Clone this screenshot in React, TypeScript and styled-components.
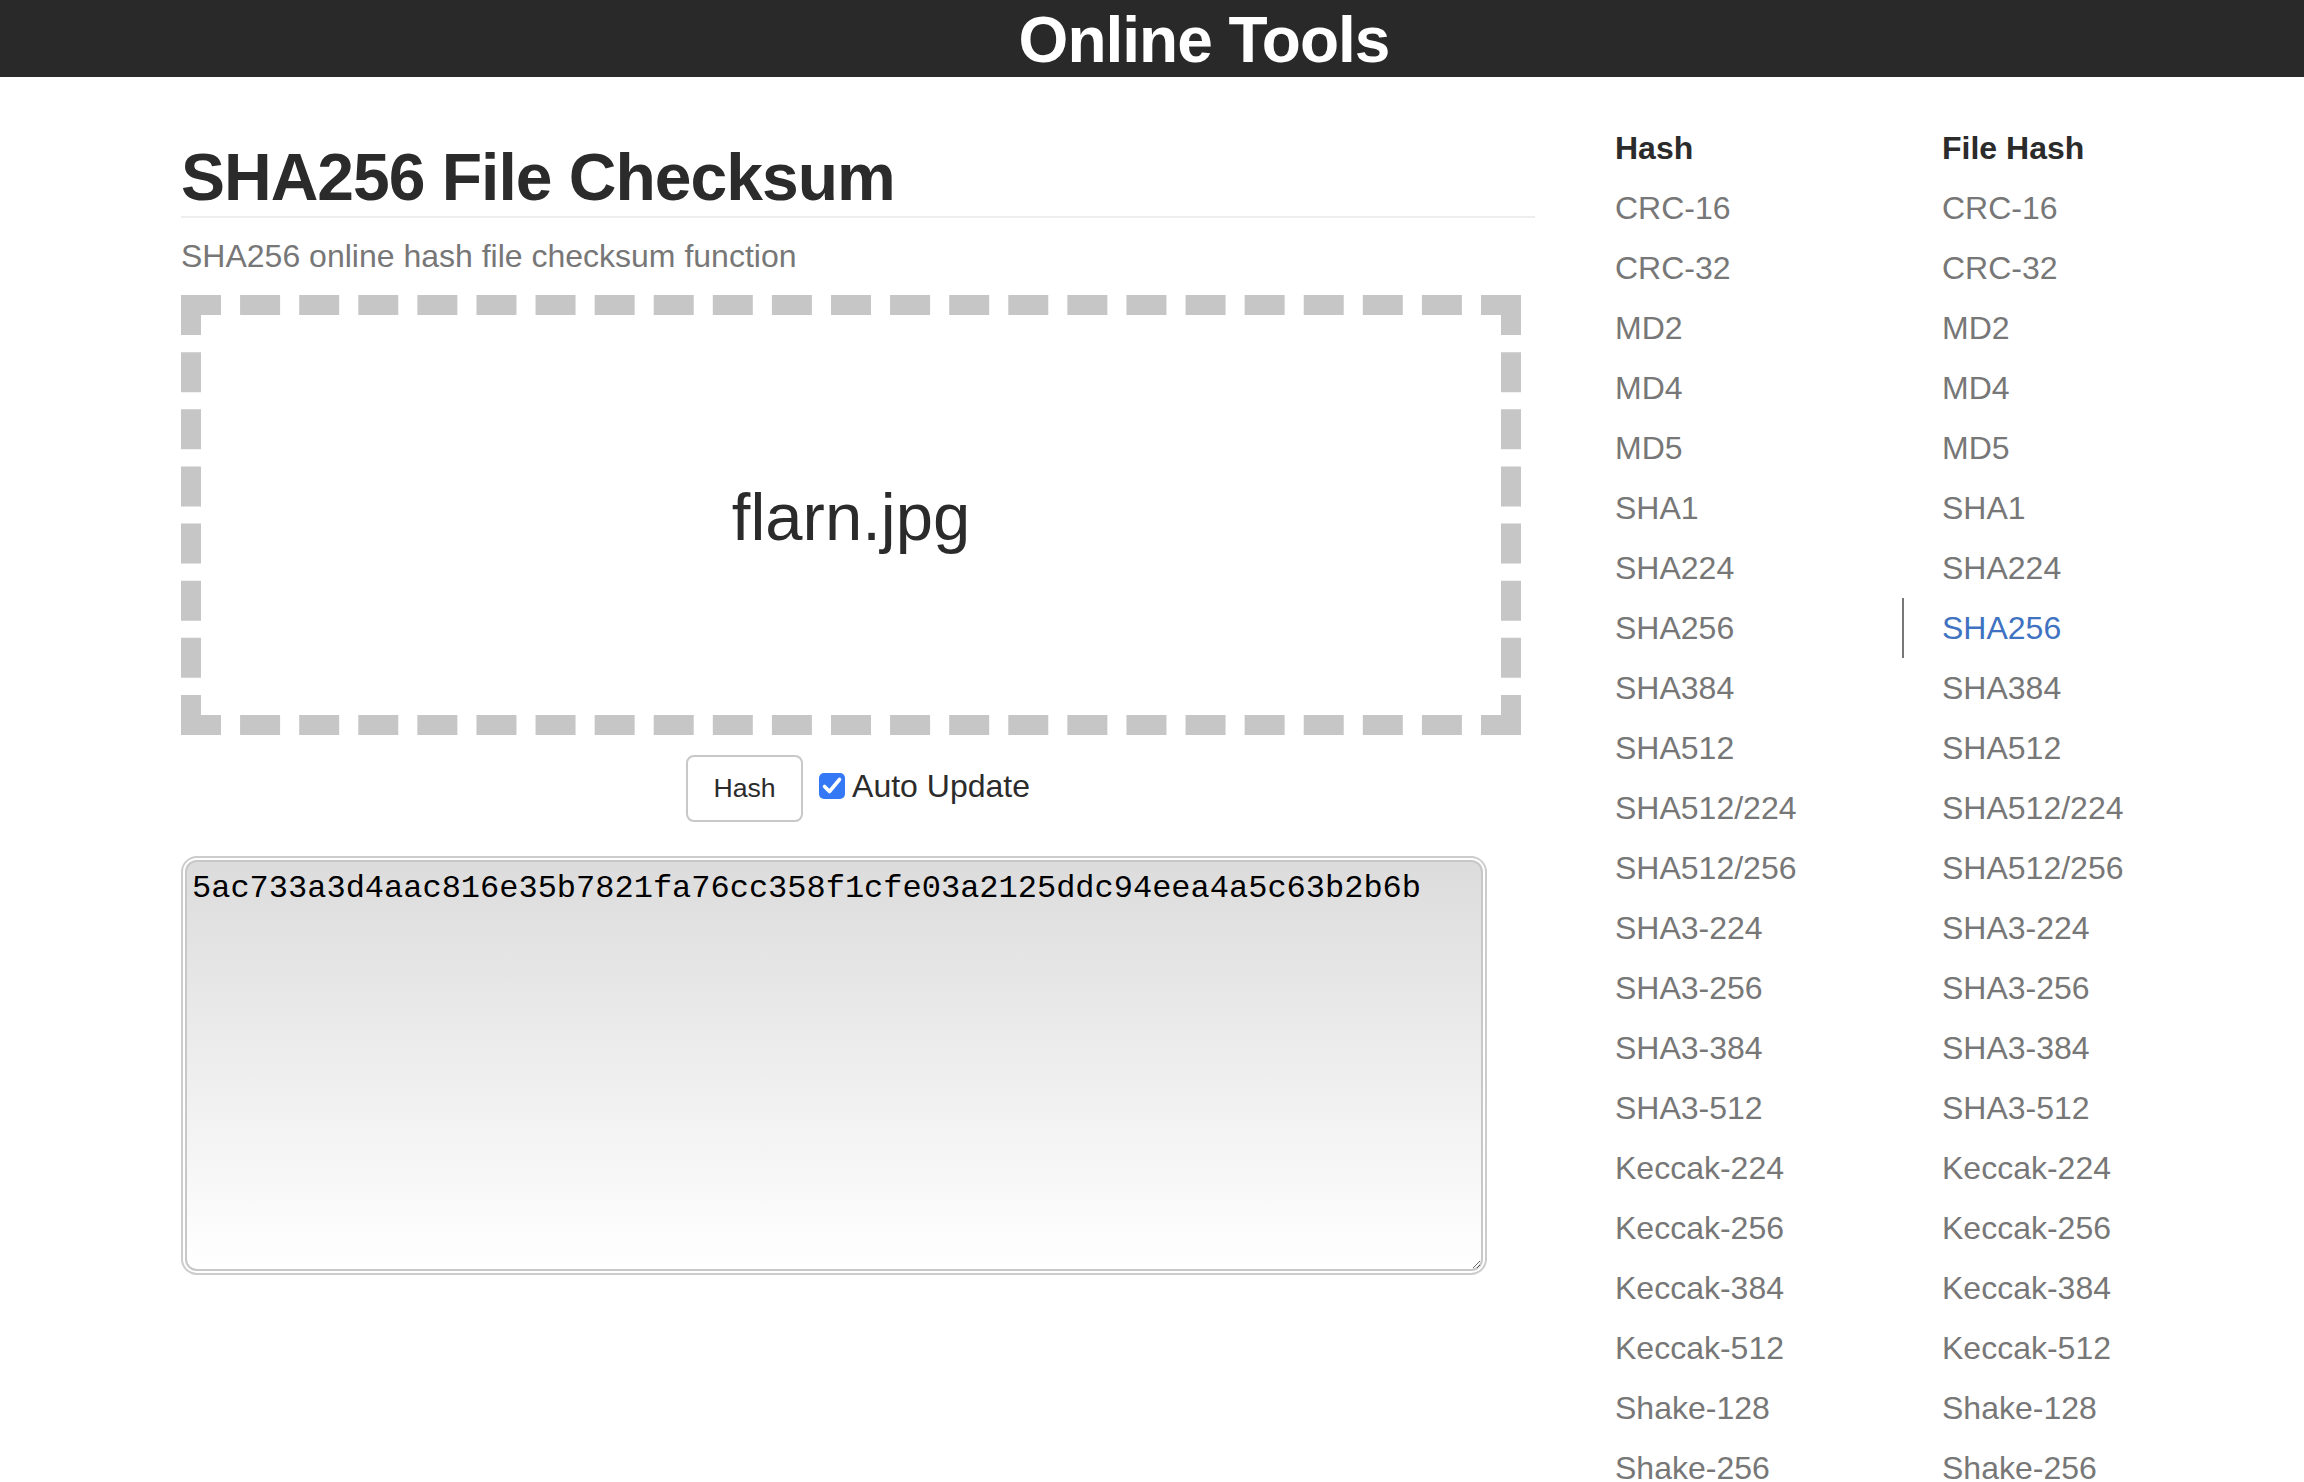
import React from "react";
import styled, { createGlobalStyle } from "styled-components";

const GlobalStyle = createGlobalStyle`
  html, body {
    margin: 0;
    padding: 0;
    background: #ffffff;
  }
  body {
    font-family: "Liberation Sans", Arial, Helvetica, sans-serif;
    color: #333333;
  }
  * { box-sizing: border-box; }
`;

const Header = styled.header`
  height: 77px;
  background: #292929;
  display: flex;
  align-items: center;
  justify-content: center;
  padding-left: 104px;
  padding-top: 2px;
`;

const HeaderTitle = styled.h1`
  margin: 0;
  font-size: 64px;
  line-height: 1;
  font-weight: 700;
  letter-spacing: -1px;
  color: #ffffff;
`;

const Page = styled.div`
  display: flex;
  align-items: flex-start;
  padding-left: 181px;
  gap: 40px;
`;

const Main = styled.main`
  width: 1354px;
  padding-top: 61px;
  display: flex;
  flex-direction: column;
`;

const Title = styled.h2`
  margin: 0;
  font-size: 66px;
  line-height: 78px;
  font-weight: 700;
  letter-spacing: -1px;
  color: #2b2b2b;
  border-bottom: 2px solid #eeeeee;
`;

const Subtitle = styled.p`
  margin: 16px 0 0;
  font-size: 32px;
  line-height: 44px;
  color: #777777;
`;

const DropZone = styled.div`
  margin-top: 17px;
  width: 1340px;
  height: 440px;
  border: 20px dashed #c6c6c6;
  display: flex;
  align-items: center;
  justify-content: center;
`;

const FileName = styled.span`
  font-size: 67px;
  line-height: 1;
  color: #2b2b2b;
  margin-top: 2px;
`;

const Controls = styled.div`
  margin-top: 20px;
  display: flex;
  align-items: center;
  justify-content: center;
  gap: 16px;
`;

const HashButton = styled.button`
  width: 117px;
  height: 67px;
  background: #ffffff;
  border: 2px solid #c8c8c8;
  border-radius: 8px;
  font-family: "Liberation Sans", Arial, Helvetica, sans-serif;
  font-size: 26.67px;
  color: #2b2b2b;
  padding: 0;
`;

const CheckLabel = styled.label`
  display: flex;
  align-items: center;
  gap: 7px;
  font-size: 32px;
  line-height: 40px;
  color: #2b2b2b;
  margin-bottom: 6px;
`;

const HiddenInput = styled.input`
  position: absolute;
  opacity: 0;
  width: 0;
  height: 0;
  margin: 0;
`;

const CheckBox = styled.span<{ $checked: boolean }>`
  width: 26px;
  height: 26px;
  border-radius: 5px;
  background: ${(p) => (p.$checked ? "#3478f6" : "#ffffff")};
  border: ${(p) => (p.$checked ? "none" : "2px solid #999")};
  display: flex;
  align-items: center;
  justify-content: center;
  flex: none;
`;

const Output = styled.textarea`
  margin: 38px 0 0 4px;
  width: 1298px;
  height: 411px;
  padding: 9px 8px 6px 5px;
  border: 2px solid #c8c8c8;
  border-radius: 12px;
  box-shadow: 0 0 0 2px #ffffff, 0 0 0 4px #cccccc;
  background: linear-gradient(to bottom, #dcdcdc 0%, #ffffff 100%);
  font-family: "Liberation Mono", "Courier New", monospace;
  font-size: 32px;
  line-height: 36px;
  color: #000000;
  outline: none;
`;

const Sidebar = styled.nav`
  display: flex;
  padding-top: 41px;
`;

const NavColumn = styled.ul`
  list-style: none;
  margin: 0;
  padding: 0;
  width: 327px;
`;

const NavHeading = styled.li`
  padding-left: 38px;
  border-left: 2px solid transparent;
  font-size: 32px;
  line-height: 60px;
  font-weight: 700;
  color: #2b2b2b;
`;

const NavItem = styled.li<{ $active?: boolean }>`
  padding-left: 38px;
  border-left: 2px solid ${(p) => (p.$active ? "#777777" : "transparent")};
  font-size: 32px;
  line-height: 60px;
`;

const NavLink = styled.a<{ $active?: boolean }>`
  color: ${(p) => (p.$active ? "#3f73c1" : "#777777")};
  text-decoration: none;
`;

const algorithms = [
  "CRC-16",
  "CRC-32",
  "MD2",
  "MD4",
  "MD5",
  "SHA1",
  "SHA224",
  "SHA256",
  "SHA384",
  "SHA512",
  "SHA512/224",
  "SHA512/256",
  "SHA3-224",
  "SHA3-256",
  "SHA3-384",
  "SHA3-512",
  "Keccak-224",
  "Keccak-256",
  "Keccak-384",
  "Keccak-512",
  "Shake-128",
  "Shake-256",
];

const columns = [
  { heading: "Hash", active: "" },
  { heading: "File Hash", active: "SHA256" },
];

export default function App() {
  const [auto, setAuto] = React.useState(true);
  return (
    <>
      <GlobalStyle />
      <Header>
        <HeaderTitle>Online Tools</HeaderTitle>
      </Header>
      <Page>
        <Main>
          <Title>SHA256 File Checksum</Title>
          <Subtitle>SHA256 online hash file checksum function</Subtitle>
          <DropZone>
            <FileName>flarn.jpg</FileName>
          </DropZone>
          <Controls>
            <HashButton type="button">Hash</HashButton>
            <CheckLabel>
              <HiddenInput
                type="checkbox"
                checked={auto}
                onChange={(e) => setAuto(e.target.checked)}
              />
              <CheckBox $checked={auto}>
                {auto && (
                  <svg width="26" height="26" viewBox="0 0 26 26">
                    <path
                      d="M5.5 13.5 L10.5 18.5 L20.5 6.5"
                      fill="none"
                      stroke="#ffffff"
                      strokeWidth="3.6"
                      strokeLinecap="round"
                      strokeLinejoin="round"
                    />
                  </svg>
                )}
              </CheckBox>
              Auto Update
            </CheckLabel>
          </Controls>
          <Output
            readOnly
            spellCheck={false}
            value="5ac733a3d4aac816e35b7821fa76cc358f1cfe03a2125ddc94eea4a5c63b2b6b"
          />
        </Main>
        <Sidebar>
          {columns.map((col) => (
            <NavColumn key={col.heading}>
              <NavHeading>{col.heading}</NavHeading>
              {algorithms.map((name) => {
                const active = name === col.active;
                return (
                  <NavItem key={name} $active={active}>
                    <NavLink href="#" $active={active}>
                      {name}
                    </NavLink>
                  </NavItem>
                );
              })}
            </NavColumn>
          ))}
        </Sidebar>
      </Page>
    </>
  );
}
